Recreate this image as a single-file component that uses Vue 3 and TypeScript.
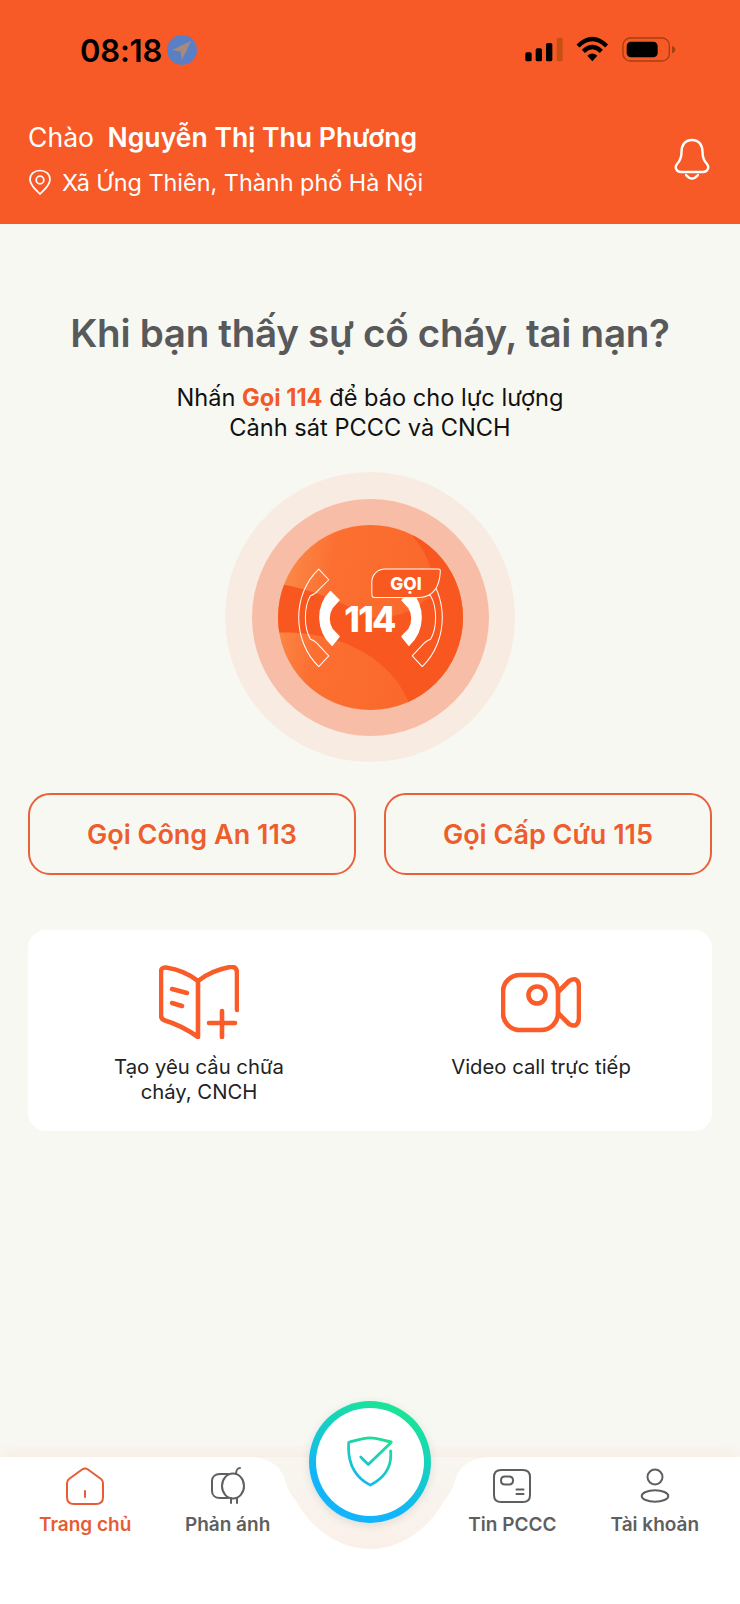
<script setup lang="ts">
interface Tab {
  label: string;
  active?: boolean;
  icon: string[];
}

const leftTabs: Tab[] = [
  {
    label: 'Trang chủ',
    active: true,
    icon: ['M17 3.5Q20 1.5 23 3.5L36 13Q38 14.5 38 17V31Q38 38 31 38H9Q2 38 2 31V17Q2 14.5 4 13Z', 'M20 25V31']
  },
  {
    label: 'Phản ánh',
    icon: [
      'M20 8H12C7 8 4 11 4 15V25C4 29 7 32 12 32H20',
      'M14 20a11 12.5 0 1 0 22 0a11 12.5 0 1 0-22 0',
      'M28 8C28 4 30 2 32 2',
      'M23 32V37M29 32V37'
    ]
  }
];

const rightTabs: Tab[] = [
  {
    label: 'Tin PCCC',
    icon: [
      'M9 4H31Q38 4 38 11V29Q38 36 31 36H9Q2 36 2 29V11Q2 4 9 4Z',
      'M13 10.5H17Q21 10.5 21 14.5T17 18.5H13Q9 18.5 9 14.5T13 10.5Z',
      'M24.5 23.5H31.5M24.5 28H31.5'
    ]
  },
  {
    label: 'Tài khoản',
    icon: [
      'M12.5 11a7.5 7.5 0 1 0 15 0a7.5 7.5 0 1 0-15 0',
      'M6.7 30a13.3 5.7 0 1 0 26.6 0a13.3 5.7 0 1 0-26.6 0'
    ]
  }
];

const tabs: Tab[] = [...leftTabs, { label: '', icon: [] }, ...rightTabs];
</script>

<template>
  <div class="screen">
    <header class="header">
      <div class="status">
        <span class="time">08:18</span>
        <svg class="loc-dot" viewBox="0 0 30 30" width="30" height="30">
          <circle cx="15" cy="15" r="15" fill="#5b7fc4" />
          <path d="M24 6L5 15L13.5 16.5L15 25Z" fill="#a68a7e" />
        </svg>
        <svg class="status-icons" viewBox="0 0 600 180" width="200" height="60">
          <rect x="76" y="97" width="19" height="27" rx="5" fill="#000" />
          <rect x="107" y="85" width="19" height="39" rx="5" fill="#000" />
          <rect x="138" y="69" width="19" height="55" rx="5" fill="#000" />
          <rect x="170" y="53" width="18" height="71" rx="5" fill="#c94e14" />
          <path d="M234 78Q277 36 320 78M250 94Q277 68 304 94" fill="none" stroke="#000" stroke-width="13" stroke-linecap="butt" />
          <path d="M262 107Q277 94 292 107L277 124Z" fill="#000" />
          <rect x="369" y="54" width="139" height="69" rx="22" fill="none" stroke="#a5400f" stroke-width="4" />
          <rect x="380" y="65" width="93" height="47" rx="13" fill="#000" />
          <path d="M516 78Q526 82 526 89T516 100Z" fill="#a5400f" />
        </svg>
      </div>
      <div class="user">
        <div class="user-text">
          <div class="greeting">Chào <strong>Nguyễn Thị Thu Phương</strong></div>
          <div class="place">
            <svg viewBox="0 0 24 26" width="24" height="26" fill="none" stroke="#fff" stroke-width="1.7">
              <path d="M12 25C6 19 2 15 2 10.5C2 5 6.5 1.5 12 1.5S22 5 22 10.5C22 15 18 19 12 25Z" />
              <circle cx="12" cy="11" r="3.8" />
            </svg>
            <span>Xã Ứng Thiên, Thành phố Hà Nội</span>
          </div>
        </div>
        <svg class="bell" viewBox="0 0 36 44" width="36" height="44" fill="none" stroke="#fff" stroke-width="2.4" stroke-linejoin="round">
          <path d="M18 2C11 2 7.5 7 7.5 14C7.5 20 6 23 3 26C0.5 29 2 34 7 34H29C34 34 35.5 29 33 26C30 23 28.5 20 28.5 14C28.5 7 25 2 18 2Z" />
          <path d="M12 37Q18 44 24 37" stroke-linecap="round" />
        </svg>
      </div>
    </header>

    <main class="content">
      <h1 class="title">Khi bạn thấy sự cố cháy, tai nạn?</h1>
      <p class="hint">
        Nhấn <b>Gọi 114</b> để báo cho lực lượng<br />
        Cảnh sát PCCC và CNCH
      </p>

      <div class="ring-outer">
        <div class="ring-mid">
          <svg class="call-btn" viewBox="188 193 554 554" width="185" height="185">
            <defs>
              <linearGradient id="callBase" x1="0" y1="0.4" x2="1" y2="0.6">
                <stop offset="0" stop-color="#fb8a49" />
                <stop offset="0.25" stop-color="#fb6f31" />
                <stop offset="1" stop-color="#fa6628" />
              </linearGradient>
              <clipPath id="callClip">
                <circle cx="465" cy="470" r="277" />
              </clipPath>
            </defs>
            <circle cx="465" cy="470" r="277" fill="url(#callBase)" />
            <path
              clip-path="url(#callClip)"
              d="M180 368C300 385 380 430 470 470C540 475 600 450 650 400C660 330 630 270 590 225L760 200V760H590C560 620 400 505 180 516Z"
              fill="#f8581f"
            />
            <g fill="#fff" stroke="#fff" stroke-width="4" stroke-linejoin="round">
              <path d="M345 392L371 418L350 441C338 460 338 485 350 505L371 527L350 553C302 510 302 435 345 392Z" />
              <path d="M585 392L559 418L580 441C592 460 592 485 580 505L559 527L580 553C628 510 628 435 585 392Z" />
            </g>
            <g fill="none" stroke="#fff" stroke-width="3" stroke-linejoin="round">
              <path d="M310 325L340 357L312 385Q300 400 285 405C265 440 265 500 285 535Q300 540 312 555L340 585L310 617C230 540 230 400 310 325Z" />
              <path d="M620 325L590 357L618 385Q630 400 645 405C665 440 665 500 645 535Q630 540 618 555L590 585L620 617C700 540 700 400 620 325Z" />
            </g>
            <path
              d="M510 325H668Q675 325 674 332C672 375 655 408 610 410H478Q469 410 469 401V365C469 342 485 325 510 325Z"
              fill="#f8591f"
              stroke="#fff"
              stroke-width="3"
            />
            <text class="goi" x="571" y="387" text-anchor="middle">GỌI</text>
            <text class="num" x="462" y="512" text-anchor="middle">114</text>
          </svg>
        </div>
      </div>

      <div class="calls">
        <button class="call-link">Gọi Công An 113</button>
        <button class="call-link">Gọi Cấp Cứu 115</button>
      </div>

      <div class="actions">
        <div class="action">
          <svg viewBox="0 0 80 74" width="80" height="74" fill="none" stroke="#f95b29" stroke-width="4.6" stroke-linecap="round" stroke-linejoin="round">
            <path d="M39 16C29 8 17 4 7 2.5Q2 2 2 7V50Q2 54 6 55.5C18 59 29 65 39 72V16C49 8 60 4 71 2Q78 1 78 8V45" />
            <path d="M13 24L28 28M13 38L23 41" />
            <path d="M50 58H76M63 46V72" />
          </svg>
          <span>Tạo yêu cầu chữa<br />cháy, CNCH</span>
        </div>
        <div class="action">
          <svg viewBox="0 0 80 74" width="80" height="74" fill="none" stroke="#f95b29" stroke-width="4.6" stroke-linejoin="round">
            <rect x="2" y="10" width="55" height="55" rx="17" />
            <circle cx="36" cy="30" r="8.5" />
            <path d="M57 27L68 16Q77 11 78 21V53Q77 64 68 59L57 48" />
          </svg>
          <span>Video call trực tiếp</span>
        </div>
      </div>
    </main>

    <nav class="tabbar">
      <svg class="notch" viewBox="0 0 740 94" width="740" height="94">
        <defs>
          <linearGradient id="notchFill" x1="0" y1="0" x2="0" y2="1">
            <stop offset="0" stop-color="#f8f6f0" />
            <stop offset="1" stop-color="#faf0e9" />
          </linearGradient>
        </defs>
        <path d="M252 0Q277 2 284 20Q288 36 296 44C315 78 345 92 370 92C395 92 425 78 444 44Q452 36 456 20Q463 2 488 0Z" fill="url(#notchFill)" />
      </svg>

      <div v-for="tab in tabs" :key="tab.label" class="tab" :class="{ active: tab.active }">
        <template v-if="tab.label">
          <svg viewBox="0 0 40 40" width="40" height="40" fill="none" stroke="currentColor" stroke-width="2" stroke-linecap="round">
            <path v-for="d in tab.icon" :key="d" :d="d" />
          </svg>
          <span>{{ tab.label }}</span>
        </template>
      </div>

      <div class="shield-btn">
        <svg viewBox="0 0 140 160" width="48" height="55" fill="none" stroke="url(#shieldStroke)" stroke-width="8" stroke-linecap="round" stroke-linejoin="round">
          <defs>
            <linearGradient id="shieldStroke" x1="110" y1="5" x2="45" y2="150" gradientUnits="userSpaceOnUse">
              <stop offset="0" stop-color="#1fe08e" />
              <stop offset="1" stop-color="#14b6f5" />
            </linearGradient>
          </defs>
          <path d="M132 20C110 16 90 8 70 8C50 8 28 16 8 21C4 75 20 120 71 146C118 122 134 85 130 46" />
          <path d="M43 64L65 86L130 23" />
        </svg>
      </div>
    </nav>
  </div>
</template>

<style scoped>
.screen {
  display: flex;
  flex-direction: column;
  height: 1604px;
  background-color: #f8f8f3;
  font-family: Inter, "Liberation Sans", sans-serif;
  overflow: hidden;
}

.header {
  height: 224px;
  background-color: #f75927;
  color: #fff;
  flex-shrink: 0;
}

.status {
  display: flex;
  align-items: center;
  height: 100px;
  padding: 0 40px 0 80px;
}

.time {
  font-size: 31px;
  font-weight: 600;
  color: #000;
  letter-spacing: -0.2px;
}

.loc-dot {
  margin-left: 5px;
}

.status-icons {
  margin-left: auto;
}

.user {
  display: flex;
  justify-content: space-between;
  padding: 15px 30px 0 28px;
}

.greeting {
  font-size: 26.6px;
  line-height: 44px;
  height: 44px;
}

.greeting strong {
  font-weight: 600;
  margin-left: 6px;
}

.place {
  display: flex;
  align-items: center;
  gap: 10px;
  height: 44px;
  font-size: 23.4px;
  margin-top: 1px;
}

.bell {
  margin-top: 23px;
}

.content {
  flex: 1;
  padding: 0 28px;
  display: flex;
  flex-direction: column;
  align-items: center;
}

.title {
  margin: 84px 0 0;
  font-size: 38.6px;
  line-height: 50px;
  font-weight: 600;
  color: #58595b;
  letter-spacing: -0.3px;
  white-space: nowrap;
}

.hint {
  margin: 25px 0 0;
  font-size: 23.6px;
  line-height: 29.5px;
  text-align: center;
  color: #111;
}

.hint b {
  color: #f15a29;
  font-weight: 700;
}

.ring-outer {
  margin-top: 30px;
  width: 290px;
  height: 290px;
  border-radius: 50%;
  background-color: #f8ebe1;
  display: flex;
  align-items: center;
  justify-content: center;
}

.ring-mid {
  width: 237px;
  height: 237px;
  border-radius: 50%;
  background-color: #f8bda6;
  display: flex;
  align-items: center;
  justify-content: center;
}

.goi {
  font-size: 52px;
  font-weight: 800;
  fill: #fff;
}

.num {
  font-size: 106px;
  font-weight: 800;
  fill: #fff;
  letter-spacing: -5px;
}

.calls {
  margin-top: 31px;
  width: 100%;
  display: grid;
  grid-template-columns: 1fr 1fr;
  gap: 28px;
}

.call-link {
  height: 82px;
  background: transparent;
  border: 2px solid #e8613a;
  border-radius: 22px;
  color: #ee5d2c;
  font-family: inherit;
  font-size: 27px;
  font-weight: 600;
}

.actions {
  margin-top: 55px;
  width: 100%;
  height: 201px;
  background-color: #fff;
  border-radius: 18px;
  display: grid;
  grid-template-columns: 1fr 1fr;
  padding-top: 35px;
  box-sizing: border-box;
}

.action {
  display: flex;
  flex-direction: column;
  align-items: center;
  text-align: center;
  font-size: 20.3px;
  line-height: 25px;
  color: #222;
}

.action span {
  margin-top: 15px;
}

.tabbar {
  position: relative;
  height: 147px;
  flex-shrink: 0;
  background-color: #fff;
  padding: 9px 14px 0;
  box-sizing: border-box;
  display: grid;
  grid-template-columns: repeat(5, 1fr);
  align-content: start;
  box-shadow: 0 -6px 14px rgba(250, 165, 120, 0.12);
}

.notch {
  position: absolute;
  left: 0;
  top: 0;
}

.tab {
  position: relative;
  display: flex;
  flex-direction: column;
  align-items: center;
  color: #5f5f5f;
  font-size: 19px;
  font-weight: 600;
  line-height: 26px;
}

.tab span {
  margin-top: 6px;
  white-space: nowrap;
}

.tab.active {
  color: #e85c33;
}

.shield-btn {
  position: absolute;
  left: 309px;
  top: -56px;
  width: 122px;
  height: 122px;
  box-sizing: border-box;
  border-radius: 50%;
  border: 7px solid transparent;
  background:
    linear-gradient(#fff, #fff) padding-box,
    linear-gradient(205deg, #1cf07f, #12b4fa 72%) border-box;
  box-shadow: 0 2px 8px rgba(60, 90, 90, 0.15);
  display: flex;
  align-items: center;
  justify-content: center;
}
</style>

<style>
html,
body {
  margin: 0;
}
</style>
